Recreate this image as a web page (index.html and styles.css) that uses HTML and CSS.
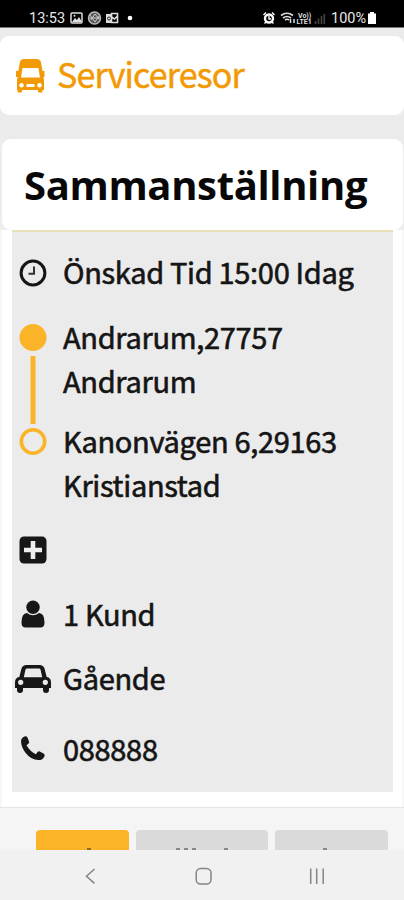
FILE: index.html
```html
<!DOCTYPE html>
<html lang="sv">
<head>
<meta charset="utf-8">
<title>Serviceresor</title>
<link rel="stylesheet" href="styles.css">
</head>
<body>
<div class="status">
  <span class="clock">13:53</span>
  <svg class="notifications" width="76" height="16" viewBox="0 0 76 16">
    <rect x="1" y="3" width="11" height="10" rx="1" fill="none" stroke="#ddd" stroke-width="1.5"/>
    <path d="M2 12l3-4 2 2 2-3 3 5z" fill="#ddd"/><circle cx="4.500" cy="5.800" r="1" fill="#ddd"/>
    <circle cx="24.500" cy="8" r="6" fill="#555" stroke="#bbb" stroke-width="1.500"/>
    <path d="M20 5l5 7 4-6M21 10l4-6 4 5M19.500 8h10" fill="none" stroke="#ccc"/>
    <path d="M36 4h6v9h-6z" fill="#ddd"/><path d="M41.500 3.500h6v9h-6zM41.500 7l3 2 3-3" fill="none" stroke="#ddd" stroke-width="1.600"/>
    <circle cx="39" cy="8.500" r="1.500" fill="none" stroke="#222"/>
    <circle cx="60" cy="8" r="2.300" fill="#fff"/>
  </svg>
  <svg class="signals" width="64" height="16" viewBox="0 0 64 16">
    <circle cx="6" cy="8.500" r="4" fill="none" stroke="#fff" stroke-width="2.400"/>
    <path d="M6 6v3h2M.5 5l2.500-2.500M11.500 5L9 2.500M3 12l-1.500 1.500M9 12l1.500 1.500" fill="none" stroke="#fff" stroke-width="1.400"/>
    <path d="M18 5.500q6-4.500 12 0M20 8q4-3 8 0M22 10q2-1.500 4 0" fill="none" stroke="#ddd" stroke-width="1.700"/>
    <path d="M27.500 9v4M31 9v4" stroke="#ddd" stroke-width="1.500"/>
    <text x="35" y="7.500">Vo))</text><text x="33.500" y="14">LTE1</text>
    <path d="M52.500 11v3M55.500 8.500v5.500M58.500 6v8M61.300 4v10" stroke="#444" stroke-width="1.600"/>
  </svg>
  <span class="percent">100%</span>
  <svg class="battery" width="10" height="14" viewBox="0 0 10 14"><path d="M3 1h4v1.500h2V13H1V2.500h2z" fill="#fff"/></svg>
</div>
<main class="page">
  <header class="brand">
    <svg class="brand-icon" width="30" height="34" viewBox="0 0 30 34">
      <path fill="#f29a05" fill-rule="evenodd" d="M8.500 0h13.500q3 0 3.800 2.500L27.500 12H29.500v6H28.200l.8 2.500V31h-1.500v1.500q0 1-1 1h-2.500q-1 0-1-1V31H7v1.500q0 1-1 1H3.500q-1 0-1-1V31H2V20.500L2.800 18H1v-6h2.300L5 2.500Q5.700 0 8.500 0zM7.600 9L6 18.500h19L23.400 9zM6.500 24a2.300 2.300 0 1 0 .01 0zM24.500 24a2.300 2.300 0 1 0 .01 0zM11.500 25h8v3h-8z"/>
    </svg>
    <span class="brand-name">Serviceresor</span>
  </header>
  <section class="summary">
    <div class="card-title"><h1>Sammanställning</h1></div>
    <div class="details">
      <div class="row time">
        <svg width="28" height="28" viewBox="0 0 28 28"><circle cx="14" cy="14" r="11.900" fill="none" stroke="#151515" stroke-width="3"/><path d="M15 7.500v7.300H9.500" fill="none" stroke="#333" stroke-width="2"/></svg>
        <span>Önskad Tid 15:00 Idag</span>
      </div>
      <div class="route">
        <svg class="route-line" width="28" height="134" viewBox="0 0 28 134"><circle cx="14" cy="14.500" r="13.500" fill="#fbb428"/><path d="M14 33v68" stroke="#fbb428" stroke-width="5"/><circle cx="14" cy="118.500" r="11.700" fill="none" stroke="#fbb428" stroke-width="3.600"/></svg>
        <div class="stops">
          <div class="from">Andrarum,27757<br>Andrarum</div>
          <div>Kanonvägen 6,29163<br>Kristianstad</div>
        </div>
      </div>
      <div class="row extra">
        <svg width="28" height="28" viewBox="0 0 28 28"><rect x=".5" y=".5" width="27" height="27" rx="4.500" fill="#171717"/><path d="M14 5v18M5 14h18" stroke="#eee" stroke-width="4.600"/></svg>
      </div>
      <div class="row customer">
        <svg width="28" height="28" viewBox="0 0 28 28"><circle cx="14" cy="7.300" r="6.700" fill="#171717"/><path d="M8 13q6 4.400 12 0 5.500.3 5.500 9.500 0 5-4 5H6.500q-4 0-4-5Q2.500 13.300 8 13z" fill="#171717"/></svg>
        <span>1 Kund</span>
      </div>
      <div class="row travel">
        <svg width="36" height="28" viewBox="0 0 36 28"><path fill="#171717" fill-rule="evenodd" d="M11.500 0h13q4 0 5 3.500l2.200 8.500q4.300.7 4.300 5.500V23h-2v2a3 3 0 0 1-6 0V23H8v2a3 3 0 0 1-6 0V23H0v-5.500q0-4.800 4.300-5.500L6.500 3.500Q7.500 0 11.500 0zM12 3.600q-1.200 0-1.500 1L8.800 12.300h18.400l-1.700-7.700q-.3-1-1.500-1zM5.700 14.700a2.700 2.700 0 1 0 .01 0zM30.300 14.700a2.700 2.700 0 1 0 .01 0z"/></svg>
        <span>Gående</span>
      </div>
      <div class="row phone">
        <svg width="28" height="28" viewBox="0 0 28 28"><path fill="#171717" d="M5.500 2.500q2-.8 3 1L10.200 8q.3 1.300-2.700 3.200 3.500 6.300 9.500 9 1.800-3.300 3.300-2.900l4.600 2.400q1.300.8.500 2.700-1.500 3.600-6 3.600Q12 26 6.300 18.500 2 12.500 2 7q.4-3.500 3.500-4.500z"/></svg>
        <span>088888</span>
      </div>
    </div>
  </section>
  <div class="actions">
    <div class="action primary"><i></i></div>
    <div class="action second"><i></i><i></i><i></i><i class="far"></i></div>
    <div class="action third"><i></i></div>
  </div>
</main>
<nav class="system-nav">
  <svg width="404" height="50" viewBox="0 0 404 50" fill="none" stroke="#858585" stroke-width="1.500"><path d="M94.500 19l-8 7.200 8 7.200"/><rect x="196.200" y="18.500" width="14.800" height="15.500" rx="4.500"/><path d="M310.700 18.500v15.500M316.700 18.500v15.500M323.200 18.500v15.500"/></svg>
</nav>
</body>
</html>
```
FILE: styles.css
```css
* { box-sizing: border-box; }
body {
  margin: 0;
  width: 404px;
  height: 900px;
  overflow: hidden;
  display: flex;
  flex-direction: column;
  background: #ebebeb;
  color: #151515;
  font-family: "Noto Sans CJK SC", "Open Sans", sans-serif;
}
svg { display: block; flex: none; }
.status {
  height: 28px;
  flex: none;
  display: flex;
  align-items: center;
  padding: 8px 0 0 29px;
  background: #000;
  border-bottom: 1px solid #777;
  color: #e8e8e8;
  font: 14.5px/16px Roboto, sans-serif;
}
.clock { width: 41px; padding-top: 2px; }
.signals { margin-left: 117px; }
.signals text { font: bold 7px Roboto, sans-serif; fill: #ddd; }
.percent { margin-left: 4px; width: 36px; padding-top: 2px; }
.page { height: 822px; flex: none; overflow: hidden; }
.brand {
  height: 79px;
  margin-top: 8px;
  padding: 0 15px;
  display: flex;
  align-items: center;
  background: #fff;
  border-radius: 9px;
}
.brand-name {
  margin: -3px 0 0 12px;
  color: #f29a05;
  font-size: 34px;
  line-height: 50px;
  letter-spacing: -.85px;
  -webkit-text-stroke: .5px #f29a05;
}
.summary {
  height: 669px;
  margin-top: 24px;
  padding-left: 2px;
  background: linear-gradient(90deg, #f7f7f7 2px, #fff 2px 402px, #f7f7f7 402px) 0 91px no-repeat, #ededed;
  border-bottom: 1px solid #e4e4e4;
}
.card-title {
  height: 91px;
  padding: 14px 0 0 22px;
  width: 401px;
  background: #fff;
  border-radius: 9px;
}
h1 {
  margin: 0;
  color: #080808;
  font: bold 40px/64px "Open Sans", sans-serif;
  letter-spacing: -.35px;
}
.details {
  width: 381px;
  height: 562px;
  margin-left: 10px;
  padding: 17px 0 0 7px;
  background: #ebebeb;
  border-top: 2px solid #e7dfb9;
  font-size: 29px;
  line-height: 44px;
  letter-spacing: -.32px;
  -webkit-text-stroke: .6px #151515;
}
.row { height: 44px; display: flex; align-items: center; gap: 16px; }
.time svg { margin-top: 4px; }
.route { display: flex; gap: 16px; margin-top: 21px; }
.route-line { margin-top: 9px; }
.from { margin-bottom: 16px; }
.extra { margin-top: 22px; }
.customer { margin-top: 19px; }
.customer svg { margin-top: 2px; }
.travel { margin-top: 20px; margin-left: -4px; gap: 12px; }
.travel svg { margin-top: 3px; }
.phone { margin-top: 27px; }
.actions {
  height: 42px;
  padding: 22px 16px 0 36px;
  display: flex;
  gap: 7px;
  background: #f5f5f5;
}
.action {
  height: 20px;
  display: flex;
  align-items: flex-end;
  justify-content: center;
  gap: 4px;
  border-radius: 4px 4px 0 0;
  background: #dadada;
}
.action i { width: 4px; height: 2px; background: #888; }
.action .far { margin-left: 24px; }
.primary { width: 93px; padding-left: 12px; background: #fbb428; }
.primary i { background: #8d6b22; }
.second { width: 132px; }
.third { width: 113px; padding-right: 14px; }
.system-nav { height: 50px; flex: none; background: #f1f1f1; }
```
